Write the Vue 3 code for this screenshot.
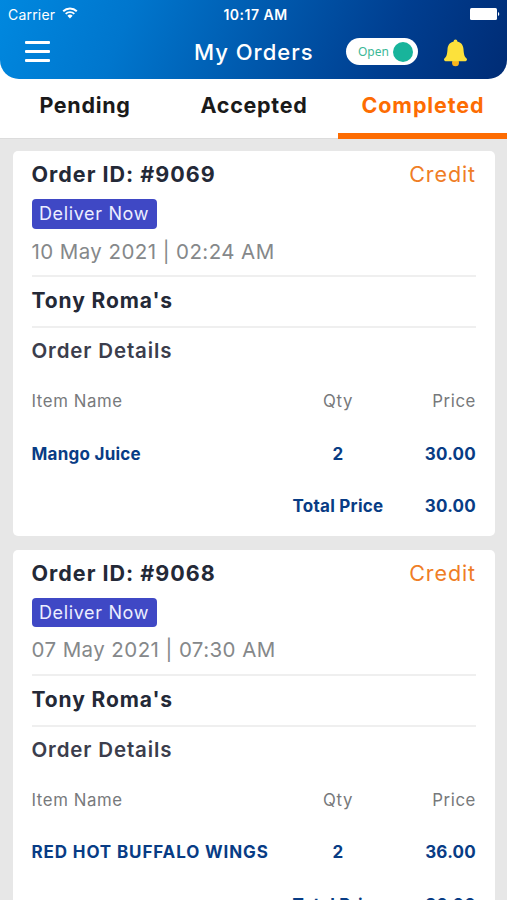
<template>
  <div class="screen">
    <header class="header">
      <div class="status">
        <div class="status__carrier">
          <span>Carrier</span>
          <svg class="status__wifi" viewBox="0 0 16 12" width="16" height="12">
            <path d="M1.2 4.3a9.7 9.7 0 0 1 13.6 0M3.7 6.9a6.1 6.1 0 0 1 8.6 0" />
            <path class="status__wifi-dot" d="M8 11.4 5.4 8.8a3.7 3.7 0 0 1 5.2 0z" />
          </svg>
        </div>
        <span class="status__time">10:17 AM</span>
        <div class="status__battery">
          <svg viewBox="0 0 30 12" width="30" height="12">
            <rect x="0" y="0" width="27" height="12" rx="1.5" />
            <path d="M28 4a2.2 2.2 0 0 1 0 4z" />
          </svg>
        </div>
      </div>
      <div class="navbar">
        <button class="navbar__menu" aria-label="Menu">
          <span></span>
          <span></span>
          <span></span>
        </button>
        <h1 class="navbar__title">My Orders</h1>
        <button class="switch" @click="isOpen = !isOpen">
          <span class="switch__label">{{ isOpen ? 'Open' : 'Closed' }}</span>
          <span class="switch__knob"></span>
        </button>
        <svg class="navbar__bell" viewBox="0 0 24 28" width="24" height="28">
          <circle cx="11.5" cy="23.7" r="3.5" fill="#fbb51c" />
          <path
            d="M11.5.4c1.2 0 1.8.8 1.8 2.1 3.8.8 6 3.6 6.2 7.8.3 5.1 1 7.6 3.1 9.3.8.8.3 2.6-1.1 2.6h-20c-1.4 0-1.9-1.8-1.1-2.6 2.1-1.7 2.8-4.2 3.1-9.3.2-4.2 2.4-7 6.2-7.8 0-1.3.6-2.1 1.8-2.1z"
            fill="#fce13b"
          />
        </svg>
      </div>
    </header>

    <nav class="tabs">
      <button
        v-for="tab in tabs"
        :key="tab"
        class="tabs__item"
        :class="{ 'tabs__item--active': tab === activeTab }"
        @click="activeTab = tab"
      >
        {{ tab }}
      </button>
    </nav>

    <main class="orders">
      <article v-for="order in orders" :key="order.id" class="order">
        <div class="order__head">
          <span class="order__id">Order ID: #{{ order.id }}</span>
          <span class="order__payment">{{ order.payment }}</span>
        </div>
        <div class="order__badge">Deliver Now</div>
        <div class="order__date">{{ order.date }}</div>
        <div class="order__customer">{{ order.customer }}</div>
        <div class="order__subtitle">Order Details</div>
        <div class="order__row order__row--head">
          <span>Item Name</span>
          <span class="order__qty">Qty</span>
          <span class="order__price">Price</span>
        </div>
        <div v-for="item in order.items" :key="item.name" class="order__row">
          <span :class="{ 'order__name--caps': item.name === item.name.toUpperCase() }">{{ item.name }}</span>
          <span class="order__qty">{{ item.qty }}</span>
          <span class="order__price">{{ item.price }}</span>
        </div>
        <div class="order__row">
          <span></span>
          <span class="order__qty">Total Price</span>
          <span class="order__price">{{ order.total }}</span>
        </div>
      </article>
    </main>
  </div>
</template>

<script setup>
import { ref } from 'vue';

const isOpen = ref(true);
const tabs = ['Pending', 'Accepted', 'Completed'];
const activeTab = ref('Completed');

const orders = [
  {
    id: 9069,
    payment: 'Credit',
    date: '10 May 2021 | 02:24 AM',
    customer: "Tony Roma's",
    items: [{ name: 'Mango Juice', qty: 2, price: '30.00' }],
    total: '30.00',
  },
  {
    id: 9068,
    payment: 'Credit',
    date: '07 May 2021 | 07:30 AM',
    customer: "Tony Roma's",
    items: [{ name: 'RED HOT BUFFALO WINGS', qty: 2, price: '36.00' }],
    total: '36.00',
  },
];
</script>

<style>
body {
  margin: 0;
}
</style>

<style scoped>
.screen {
  height: 900px;
  overflow: hidden;
  display: flex;
  flex-direction: column;
  background: #e7e7e7;
  font-family: Inter, 'Liberation Sans', sans-serif;
}

button {
  border: 0;
  padding: 0;
  background: none;
  font-family: inherit;
  cursor: pointer;
}

.header {
  position: relative;
  z-index: 1;
  flex: none;
  height: 79px;
  background: linear-gradient(112deg, #0088df 0%, #0076cd 25%, #0058ac 52%, #003e90 76%, #002c75 100%);
  border-radius: 0 0 19px 19px;
  color: #fff;
}

.status {
  display: grid;
  grid-template-columns: 1fr auto 1fr;
  align-items: center;
  height: 28px;
  padding: 0 7px 0 8px;
  box-sizing: border-box;
}

.status__carrier {
  display: flex;
  align-items: center;
  gap: 7px;
  font-size: 14px;
  letter-spacing: 0.2px;
}

.status__wifi {
  margin-top: -2px;
  fill: none;
  stroke: #fff;
  stroke-width: 1.9;
}

.status__wifi .status__wifi-dot {
  fill: #fff;
  stroke: none;
}

.status__time {
  margin-left: 3px;
  font-size: 14px;
  font-weight: 600;
  letter-spacing: 0.5px;
}

.status__battery {
  display: flex;
  justify-content: flex-end;
  fill: #fff;
}

.navbar {
  display: flex;
  align-items: center;
  height: 47px;
  padding-left: 25px;
}

.navbar__menu {
  display: flex;
  flex-direction: column;
  justify-content: space-between;
  width: 25px;
  height: 21px;
}

.navbar__menu span {
  height: 3px;
  border-radius: 1px;
  background: #fff;
}

.navbar__title {
  width: 120px;
  margin: 0 0 0 144px;
  font-size: 22px;
  font-weight: 500;
  letter-spacing: 1px;
  white-space: nowrap;
}

.switch {
  display: flex;
  align-items: center;
  justify-content: space-between;
  width: 72px;
  height: 27px;
  margin-left: 32px;
  padding: 0 5px 0 12px;
  border-radius: 14px;
  background: #fff;
}

.switch__label {
  color: #3cb896;
  font-family: 'Noto Sans', sans-serif;
  font-size: 12px;
}

.switch__knob {
  width: 20px;
  height: 20px;
  border-radius: 50%;
  background: #18b49b;
}

.navbar__bell {
  margin: 2px 0 0 26px;
}

/* the strip runs up behind the header's rounded corners */
.tabs {
  flex: none;
  display: flex;
  height: 80px;
  margin-top: -20px;
  padding-top: 20px;
  border-bottom: 1px solid #dcdcdc;
  box-sizing: border-box;
  background: #fff;
}

.tabs__item {
  flex: 1;
  height: 60px;
  padding: 0 0 8px 1px;
  box-sizing: border-box;
  color: #1a1a1a;
  font-size: 21.5px;
  font-weight: 700;
  letter-spacing: 0.7px;
}

.tabs__item--active {
  padding-bottom: 2px;
  border-bottom: 6px solid #fd6c02;
  color: #fd6c02;
  letter-spacing: 0.9px;
}

.orders {
  display: flex;
  flex-direction: column;
  gap: 13.5px;
  padding: 12px 12.5px 0 13px;
}

.order {
  flex: none;
  height: 385.2px;
  padding: 8px 18.5px 0;
  box-sizing: border-box;
  border-radius: 5px;
  background: #fff;
  color: #242937;
}

.order__head {
  display: flex;
  align-items: center;
  justify-content: space-between;
  height: 30px;
  font-size: 21.5px;
}

.order__id {
  font-weight: 700;
  letter-spacing: 1px;
}

.order__payment {
  color: #ef7d26;
  letter-spacing: 0.9px;
}

.order__badge {
  display: flex;
  align-items: center;
  justify-content: center;
  width: 125px;
  height: 29.5px;
  margin-top: 10px;
  border-radius: 4px;
  background: #3f48c5;
  color: #eceeff;
  font-size: 18px;
  letter-spacing: 0.65px;
}

.order__date {
  height: 46.5px;
  border-bottom: 2px solid #efefef;
  color: #85888a;
  font-size: 20.5px;
  letter-spacing: 0.42px;
  line-height: 46px;
}

.order__customer {
  height: 49px;
  border-bottom: 2px solid #efefef;
  font-size: 21px;
  font-weight: 700;
  letter-spacing: 0.9px;
  line-height: 48px;
}

.order__subtitle {
  height: 47px;
  color: #3b3d4c;
  font-size: 20.5px;
  font-weight: 600;
  letter-spacing: 0.85px;
  line-height: 46px;
}

.order__row {
  display: grid;
  grid-template-columns: 1fr 120px 78px;
  height: 52.6px;
  color: #083c85;
  font-size: 17px;
  font-weight: 700;
  letter-spacing: 0.25px;
  line-height: 53px;
  white-space: nowrap;
}

.order__row--head {
  color: #77797b;
  font-size: 16.8px;
  font-weight: 400;
  letter-spacing: 0.6px;
}

.order__name--caps {
  letter-spacing: 0.88px;
}

.order__qty {
  text-align: center;
}

.order__price {
  text-align: right;
}
</style>
